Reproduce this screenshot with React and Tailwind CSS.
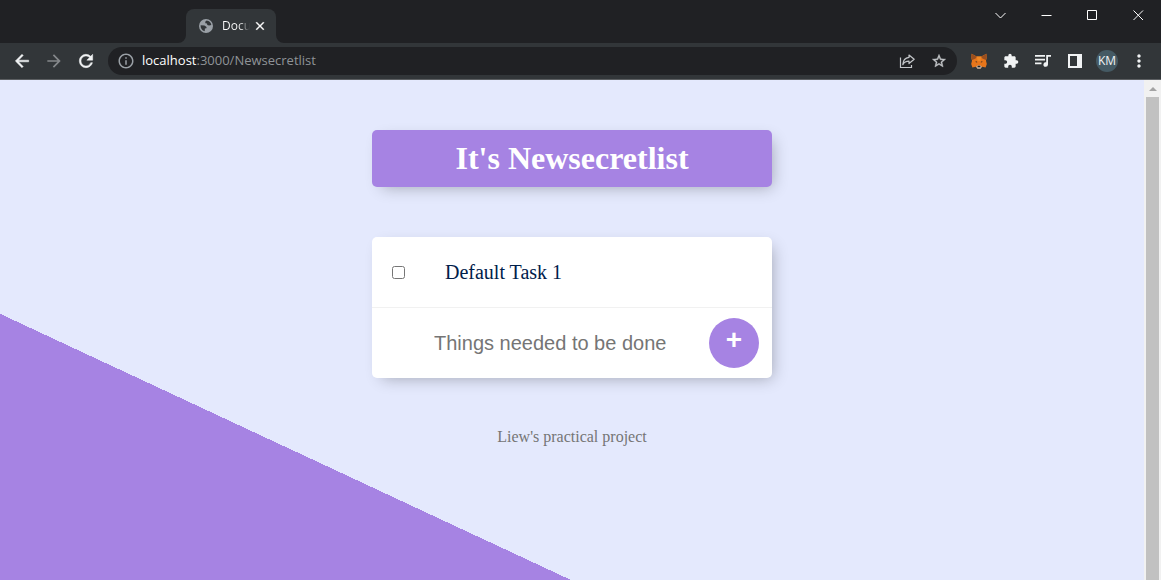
import { useState } from "react";
import { MdArrowForward, MdExtension, MdInfoOutline, MdMoreVert } from "react-icons/md";

const BOLD_PATHS = {
  back: "M20 11H7.83l5.59-5.59L12 4l-8 8 8 8 1.41-1.41L7.83 13H20v-2z",
  reload:
    "M17.65 6.35A7.958 7.958 0 0 0 12 4c-4.42 0-7.99 3.58-7.99 8s3.57 8 7.99 8c3.73 0 6.84-2.55 7.73-6h-2.08A5.99 5.99 0 0 1 12 18c-3.31 0-6-2.69-6-6s2.69-6 6-6c1.66 0 3.14.69 4.22 1.78L13 11h7V4l-2.35 2.35z",
  close:
    "M19 6.41L17.59 5 12 10.59 6.41 5 5 6.41 10.59 12 5 17.59 6.41 19 12 13.41 17.59 19 19 17.59 13.41 12z",
  star: "M22 9.24l-7.19-.62L12 2 9.19 8.63 2 9.24l5.46 4.73L5.82 21 12 17.27 18.18 21l-1.63-7.03L22 9.24zM12 15.4l-3.76 2.27 1-4.28-3.32-2.88 4.38-.38L12 6.1l1.71 4.04 4.38.38-3.32 2.88 1 4.28L12 15.4z",
};

function BoldIcon({ name, className }) {
  return (
    <svg viewBox="0 0 24 24" className={className} fill="currentColor" stroke="currentColor" strokeWidth="0.6" aria-hidden="true">
      <path d={BOLD_PATHS[name]} />
    </svg>
  );
}

function GlobeIcon() {
  return (
    <svg viewBox="0 0 14 14" className="size-[14px] shrink-0" aria-hidden="true">
      <circle cx="7" cy="7" r="7" fill="#9aa0a6" />
      <path
        d="M7.6 1.6 L6.2 2.7 L6.4 4.2 L8 4.6 L8.3 6 L10 6.4 L12.3 6 C12.2 4 10.4 1.8 7.6 1.6 Z M1.6 6.3 L5.4 6.6 L7.6 8 L7.4 9.3 L5.9 9.6 L5.7 12.2 C3 11.6 1.3 9.2 1.6 6.3 Z"
        fill="#323639"
      />
    </svg>
  );
}

function ShareIcon() {
  return (
    <svg viewBox="0 0 16 16" className="size-4" fill="none" stroke="currentColor" strokeWidth="1.2" aria-hidden="true">
      <path d="M1.5 4.5 V14.5 H12.5 V12" />
      <path d="M10 2 L15.2 6.2 L10 10.5 V8.2 C7 8.2 5 9.3 3.8 11.6 C4 7.8 6.2 4.9 10 4.4 Z" strokeLinejoin="round" />
    </svg>
  );
}

function FoxIcon() {
  return (
    <svg viewBox="0 0 16 16" className="size-4" aria-hidden="true">
      <path d="M0.6 0.8 L5.8 3.5 H10.2 L15.4 0.8 L15.7 5 L15 7.8 L15.8 11 L14.6 14.6 L11.2 13.8 L9.6 15.2 H6.4 L4.8 13.8 L1.4 14.6 L0.2 11 L1 7.8 L0.3 5 Z" fill="#e8761b" />
      <path d="M0.6 0.8 L5.8 3.8 L4.6 5.6 L1.2 7 L0.3 5 Z M15.4 0.8 L10.2 3.8 L11.4 5.6 L14.8 7 L15.7 5 Z" fill="#9a4f1f" />
      <path d="M5.8 3.5 H10.2 L9.4 8 H6.6 Z" fill="#f08a26" />
      <path d="M4 8.8 L6 8.2 L6.2 9.7 Z M12 8.8 L10 8.2 L9.8 9.7 Z" fill="#5a3a22" />
      <path d="M5.2 13.8 L6.3 12.6 H9.7 L10.8 13.8 L9.6 15.7 H6.4 Z" fill="#c9b6a7" />
      <path d="M6.7 12.8 H9.3 L9.5 14.2 H6.5 Z" fill="#202124" />
    </svg>
  );
}

function MediaIcon() {
  return (
    <svg viewBox="0 0 16 14" className="h-[14px] w-4" aria-hidden="true">
      <path d="M0 1 H10 V2.7 H0 Z M0 4.8 H10 V6.5 H0 Z M0 8.6 H6.5 V10.3 H0 Z" fill="currentColor" />
      <path d="M11.2 1 H16 V2.8 H13 V10.6 A2.3 2.3 0 1 1 11.2 8.3 Z" fill="currentColor" />
    </svg>
  );
}

function SidePanelIcon() {
  return (
    <svg viewBox="0 0 14 14" className="size-[14px]" aria-hidden="true">
      <path d="M0 0 H14 V14 H0 Z M2 2 V12 H9 V2 Z" fillRule="evenodd" fill="currentColor" />
    </svg>
  );
}

function WindowControls() {
  const shapes = [
    ["Search tabs", "M0.5 3 L5.5 8 L10.5 3"],
    ["Minimize", "M0.5 5.5 H10.5"],
    ["Maximize", "M0.5 0.5 H9.5 V9.5 H0.5 Z"],
    ["Close window", "M0.5 0.5 L10 10 M10 0.5 L0.5 10"],
  ];
  return (
    <div className="ml-auto flex h-[30px]">
      {shapes.map(([label, d]) => (
        <button key={label} type="button" aria-label={label} className="flex w-[46px] items-center justify-center text-white">
          <svg viewBox="0 0 11 11" className="size-[11px]" fill="none" stroke="currentColor" strokeWidth="1">
            <path d={d} />
          </svg>
        </button>
      ))}
    </div>
  );
}

function TitleBar() {
  return (
    <header className="flex h-[43px] shrink-0 bg-[#202124]">
      <div className="flex items-end pl-[178px]">
        <svg viewBox="0 0 8 8" className="size-2" aria-hidden="true">
          <path d="M8 0 V8 H0 A8 8 0 0 0 8 0 Z" fill="#323639" />
        </svg>
        <div className="flex h-[34px] w-[90px] items-center rounded-t-lg bg-[#323639] pl-[13px]">
          <GlobeIcon />
          <span className="ml-[9px] w-7 bg-linear-to-r from-white from-60% to-transparent bg-clip-text text-xs text-transparent">
            Docu
          </span>
          <button type="button" aria-label="Close tab" className="ml-[3px] text-white">
            <BoldIcon name="close" className="size-[14px]" />
          </button>
        </div>
        <svg viewBox="0 0 8 8" className="size-2" aria-hidden="true">
          <path d="M0 0 V8 H8 A8 8 0 0 1 0 0 Z" fill="#323639" />
        </svg>
      </div>
      <WindowControls />
    </header>
  );
}

function ToolButton({ label, className = "", children }) {
  return (
    <button type="button" aria-label={label} className={`flex w-8 items-center justify-center ${className}`}>
      {children}
    </button>
  );
}

function Toolbar() {
  return (
    <nav className="flex h-[37px] shrink-0 items-center border-b border-[#5c5f62] bg-[#323639] pr-[6px] pl-[6px] text-[#f1f3f4]">
      <ToolButton label="Back"><BoldIcon name="back" className="size-5" /></ToolButton>
      <ToolButton label="Forward" className="text-[#85888b]"><MdArrowForward className="size-5" /></ToolButton>
      <ToolButton label="Reload"><BoldIcon name="reload" className="size-5" /></ToolButton>
      <div className="ml-[6px] flex h-7 flex-1 items-center rounded-full bg-[#202124] pr-[2px] pl-[9px] text-[#c4c7ca]">
        <MdInfoOutline className="size-[18px] shrink-0 text-[#9aa0a6]" />
        <a href="#Newsecretlist" className="ml-[7px] flex-1 text-[13px] text-[#8f9397]">
          <span className="text-white">localhost</span>:3000/Newsecretlist
        </a>
        <ToolButton label="Share"><ShareIcon /></ToolButton>
        <ToolButton label="Bookmark"><BoldIcon name="star" className="size-4" /></ToolButton>
      </div>
      <div className="ml-[6px] flex">
        <ToolButton label="Wallet"><FoxIcon /></ToolButton>
        <ToolButton label="Extensions"><MdExtension className="size-4" /></ToolButton>
        <ToolButton label="Media"><MediaIcon /></ToolButton>
        <ToolButton label="Side panel"><SidePanelIcon /></ToolButton>
        <ToolButton label="Profile">
          <span className="flex size-[22px] items-center justify-center rounded-full bg-[#455a64] text-xs">KM</span>
        </ToolButton>
        <ToolButton label="Menu"><MdMoreVert className="size-5" /></ToolButton>
      </div>
    </nav>
  );
}

function ScrollTrack() {
  return (
    <div className="flex w-[17px] shrink-0 flex-col items-center bg-[#f1f1f1]" aria-hidden="true">
      <div className="flex h-[17px] items-center">
        <svg viewBox="0 0 8 4" className="h-1 w-2">
          <path d="M0 4 L4 0 L8 4 Z" fill="#a3a3a3" />
        </svg>
      </div>
      <div className="w-[13px] flex-1 bg-[#c1c1c1]" />
    </div>
  );
}

function TodoPage() {
  const [tasks, setTasks] = useState(["Default Task 1"]);
  const [draft, setDraft] = useState("");

  const addTask = (event) => {
    event.preventDefault();
    if (!draft.trim()) return;
    setTasks([...tasks, draft.trim()]);
    setDraft("");
  };

  return (
    <main className="flex flex-1 flex-col items-center gap-[50px] overflow-hidden bg-[#e4e9fd] bg-[linear-gradient(25deg,#a683e3_50%,#e4e9fd_50%)] bg-[length:100%_1001px] bg-no-repeat px-4 pt-[50px] font-['Liberation_Serif',serif]">
      <h1 className="w-full max-w-[400px] rounded-[5px] bg-[#a683e3] p-[10px] text-center text-[32px] leading-[37px] font-bold text-white shadow-[5px_5px_15px_-5px_rgba(0,0,0,0.3)]">
        It's Newsecretlist
      </h1>
      <section className="w-full max-w-[400px] rounded-[5px] bg-white shadow-[5px_5px_15px_-5px_rgba(0,0,0,0.3)]">
        {tasks.map((task, index) => (
          <label key={index} className="flex min-h-[71px] items-center border-b border-[#f1f1f1] px-5 text-xl text-[#00204a]">
            <input type="checkbox" className="mr-10 size-[13px]" />
            {task}
          </label>
        ))}
        <form onSubmit={addTask} className="flex h-[70px] items-center pr-[13px] pl-[62px]">
          <input
            type="text"
            aria-label="New task"
            placeholder="Things needed to be done"
            value={draft}
            onChange={(event) => setDraft(event.target.value)}
            className="h-[60px] min-w-0 flex-1 bg-transparent font-['Liberation_Sans',sans-serif] text-xl outline-none placeholder:text-[#757575]"
          />
          <button
            type="submit"
            aria-label="Add task"
            className="size-[50px] shrink-0 rounded-full bg-[#a683e3] pb-[6px] text-center font-['Liberation_Sans',sans-serif] text-[28px] leading-8 font-bold text-white"
          >
            +
          </button>
        </form>
      </section>
      <footer className="text-base leading-[18px] text-[#757575]">Liew's practical project</footer>
    </main>
  );
}

export default function App() {
  return (
    <div className="flex h-screen flex-col overflow-hidden font-['Open_Sans','Noto_Sans',sans-serif]">
      <TitleBar />
      <Toolbar />
      <div className="flex min-h-0 flex-1">
        <TodoPage />
        <ScrollTrack />
      </div>
    </div>
  );
}
